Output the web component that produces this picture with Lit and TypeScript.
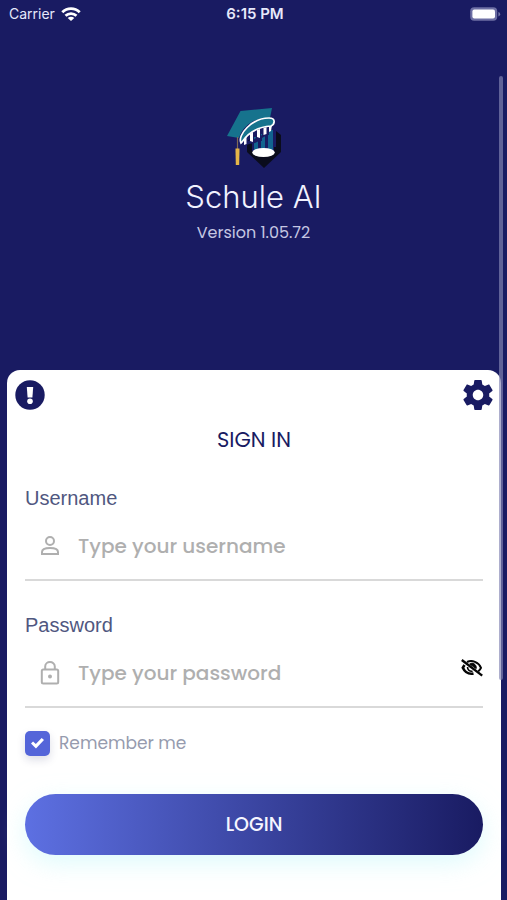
import { LitElement, html, css } from "lit";
import { customElement, state } from "lit/decorators.js";

@customElement("status-bar")
class StatusBar extends LitElement {
  static styles = css`
    :host {
      display: grid;
      grid-template-columns: 1fr auto 1fr;
      align-items: center;
      height: 28px;
      padding: 0 6px 0 9px;
      color: #e6e8fb;
      font: 400 14px/28px Inter, sans-serif;
    }
    .carrier {
      display: flex;
      align-items: center;
      gap: 6px;
    }
    .time {
      font-size: 15px;
      font-weight: 600;
    }
    .battery {
      justify-self: end;
    }
    svg {
      display: block;
    }
  `;

  render() {
    return html`
      <span class="carrier">
        Carrier
        <svg width="20" height="14" viewBox="0 0 20 14" aria-hidden="true">
          <g fill="none" stroke="#fff" stroke-width="2.8">
            <path d="M1.3 5.2C6.2.4 13.8.4 18.7 5.2" />
            <path d="M4.500 8.800C7.700 5.800 12.300 5.800 15.500 8.800" />
          </g>
          <path d="M6.700 11C8.600 9.300 11.400 9.300 13.300 11L10 14Z" fill="#fff" />
        </svg>
      </span>
      <span class="time">6:15 PM</span>
      <svg class="battery" width="31" height="14" viewBox="0 0 31 14" aria-hidden="true">
        <rect x=".2" y=".2" width="27" height="13.600" rx="4" fill="#6d6fa4" />
        <rect x="2.400" y="2.400" width="22.600" height="9.200" rx="2" fill="#fff" />
        <path d="M28.400 5V9.400Q30.200 8.800 30.200 7.200T28.400 5Z" fill="#7476a8" />
      </svg>
    `;
  }
}

@customElement("app-logo")
class AppLogo extends LitElement {
  static styles = css`
    :host,
    svg {
      display: block;
    }
  `;

  render() {
    return html`
      <svg width="56" height="62" viewBox="0 0 56 62" role="img" aria-label="Schule AI logo">
        <path d="M21 34L26 31V40H50V24L55 28V45L38 61L21 45Z" fill="#0a0c1c" />
        <path d="M26 30L48 18V44H26Z" fill="#191b62" />
        <path d="M28 30H32V44H28ZM35 27H39V43H35ZM42 23H47V44H42Z" fill="#11638f" />
        <ellipse cx="37.500" cy="45.500" rx="11.300" ry="4.500" fill="#fff" />
        <path d="M1 29L14.500 4L46 1L44 11C30 10 17 18 13 31Z" fill="#16738d" />
        <path
          d="M17 31L22 28V34L24 33V27L27 25V33L30 31V24L33 22V30L36 28V21L39 20V26L42 24V19L46 18L45 23L43 25V28H41L36 31V34H33L29 36L23 37L19 39L16 37Z"
          fill="#191b62"
        />
        <path
          d="M18 30L20.500 28V37L18 38ZM24 27L27 25V35L24 34ZM31 23L34 22V31L31 30ZM37.500 21L40.500 20V27L37.500 28ZM43 19L46 18L45 24L43 25Z"
          fill="#fff"
        />
        <path
          d="M15 36C11 28 26 11 43 11C50 11 49 17 45 19C31 20 22 26 16 35Z"
          fill="#16738d"
          stroke="#fff"
          stroke-width="1.700"
        />
        <path d="M11.500 30V42" stroke="#806b55" stroke-width="1.200" />
        <path d="M9.500 41.500H13.500V44L13.200 58H9.800L9.500 44Z" fill="#e5b548" />
      </svg>
    `;
  }
}

@customElement("app-root")
class AppRoot extends LitElement {
  @state() private showPassword = false;

  static styles = css`
    :host {
      display: block;
      color: #191b62;
      font-family: Poppins, Inter, sans-serif;
    }
    * {
      box-sizing: border-box;
    }
    svg {
      display: block;
      flex: none;
    }
    .page {
      position: relative;
      display: flex;
      flex-direction: column;
      min-height: 100vh;
      background: #191b62;
    }
    .brand {
      display: flex;
      flex-direction: column;
      align-items: center;
      padding: 79px 0 127px;
    }
    h1 {
      margin: 8px 0 0;
      color: #f1f2ff;
      font: 300 31px/40px Inter, sans-serif;
    }
    .version {
      margin: 6px 0 0;
      color: #c5c7e2;
      font-size: 16px;
      line-height: 20px;
    }
    .card {
      flex: 1;
      margin: 0 6px 0 7px;
      padding: 10px 8px 44px;
      border-radius: 13px 13px 0 0;
      background: #fff;
    }
    .tools {
      display: flex;
      justify-content: space-between;
    }
    button {
      padding: 0;
      border: 0;
      background: none;
      color: inherit;
      font: inherit;
      cursor: pointer;
    }
    form {
      padding: 0 10px;
    }
    h2 {
      margin: 16px 0 0;
      font-size: 21px;
      font-weight: 400;
      line-height: 28px;
      text-align: center;
    }
    .field {
      margin-top: 30px;
    }
    .label {
      display: block;
      color: #505780;
      font: 400 20px/28px "Liberation Sans", Arial, sans-serif;
    }
    .control {
      display: flex;
      align-items: center;
      height: 69px;
      padding-left: 12px;
      border-bottom: 2px solid #d9d9d9;
      color: #afafaf;
    }
    .text {
      flex: 1;
      min-width: 0;
      margin-left: 15px;
      padding: 0;
      border: 0;
      outline: 0;
      background: none;
      color: #505780;
      font: 500 20px/30px Poppins, Inter, sans-serif;
    }
    .text::placeholder {
      color: #afafaf;
      opacity: 1;
    }
    .reveal {
      margin-bottom: 10px;
      color: #050505;
    }
    .remember {
      display: flex;
      align-items: center;
      gap: 9px;
      width: fit-content;
      margin-top: 22px;
      color: #969bae;
      font-size: 17px;
      line-height: 26px;
    }
    .tick {
      display: grid;
      place-items: center;
      width: 25px;
      height: 25px;
      margin: 0;
      appearance: none;
      border-radius: 5px;
      background: #5465d9;
      box-shadow: 0 4px 8px #19206026;
    }
    .tick:checked::before {
      content: "";
      width: 13px;
      height: 11px;
      background: #fff;
      clip-path: polygon(0 55%, 16% 36%, 37% 60%, 82% 5%, 100% 22%, 38% 100%);
    }
    .login {
      display: block;
      width: 100%;
      height: 61px;
      margin-top: 38px;
      border-radius: 31px;
      background: linear-gradient(90deg, #5d70e2, #191b62);
      box-shadow: 0 8px 24px #c8f8fa99;
      color: #f6f6ff;
      font-size: 19px;
      font-weight: 500;
      line-height: 30px;
    }
    .scroll {
      position: absolute;
      top: 76px;
      right: 4px;
      width: 4px;
      height: 604px;
      border-radius: 2px;
      background: #8486b4aa;
    }
  `;

  private toggle() {
    this.showPassword = !this.showPassword;
  }

  render() {
    return html`
      <div class="page">
        <status-bar></status-bar>
        <header class="brand">
          <app-logo></app-logo>
          <h1>Schule AI</h1>
          <p class="version">Version 1.05.72</p>
        </header>
        <main class="card">
          <div class="tools">
            <button type="button" aria-label="Information">
              <svg width="30" height="30" viewBox="0 0 30 30">
                <circle cx="15" cy="15" r="14.700" fill="#191b62" />
                <path d="M11.800 7H18.200L17.400 17.500H12.600Z" fill="#fff" />
                <circle cx="15" cy="21.200" r="2.800" fill="#fff" />
              </svg>
            </button>
            <button type="button" aria-label="Settings">
              <svg width="30" height="30" viewBox="2 2 20 20" fill="#191b62">
                <path
                  d="M19.430 12.980c.04-.32.07-.64.07-.98s-.03-.66-.07-.98l2.110-1.650c.19-.15.24-.42.12-.64l-2-3.460c-.12-.22-.39-.3-.61-.22l-2.490 1c-.52-.4-1.080-.73-1.690-.98l-.38-2.650C14.460 2.180 14.250 2 14 2h-4c-.25 0-.46.18-.49.42l-.38 2.650c-.61.25-1.170.59-1.690.98l-2.490-1c-.23-.09-.49 0-.61.22l-2 3.460c-.13.22-.07.49.12.64l2.110 1.650c-.04.32-.07.65-.07.98s.03.66.07.98l-2.110 1.650c-.19.15-.24.42-.12.64l2 3.460c.12.22.39.3.61.22l2.490-1c.52.4 1.080.73 1.690.98l.38 2.650c.03.24.24.42.49.42h4c.25 0 .46-.18.49-.42l.38-2.650c.61-.25 1.170-.59 1.690-.98l2.490 1c.23.09.49 0 .61-.22l2-3.460c.12-.22.07-.49-.12-.64l-2.110-1.650zM12 15.500c-1.930 0-3.500-1.570-3.500-3.500s1.570-3.500 3.500-3.500 3.500 1.570 3.500 3.500-1.570 3.500-3.500 3.500z"
                />
              </svg>
            </button>
          </div>
          <form @submit=${(e: Event) => e.preventDefault()}>
            <h2>SIGN IN</h2>
            <div class="field">
              <label class="label" for="username">Username</label>
              <div class="control">
                <svg width="26" height="26" viewBox="0 0 26 26" fill="none" stroke="currentColor" stroke-width="2">
                  <circle cx="13" cy="8" r="4" />
                  <path d="M5 21V19C5 16.500 8.500 15 13 15S21 16.500 21 19V21Z" />
                </svg>
                <input class="text" id="username" type="text" placeholder="Type your username" />
              </div>
            </div>
            <div class="field">
              <label class="label" for="password">Password</label>
              <div class="control">
                <svg width="26" height="26" viewBox="0 0 26 26" fill="none" stroke="currentColor" stroke-width="2">
                  <rect x="4.800" y="9.500" width="16.400" height="14" rx="1.500" />
                  <path d="M8.200 9.500V6.500C8.200 .6 17.800 .6 17.800 6.500V9.500" />
                  <circle cx="13" cy="16.500" r="2" fill="currentColor" stroke="none" />
                </svg>
                <input
                  class="text"
                  id="password"
                  type=${this.showPassword ? "text" : "password"}
                  placeholder="Type your password"
                />
                <button class="reveal" type="button" aria-label="Show password" @click=${this.toggle}>
                  <svg width="22" height="20" viewBox="0 0 22 20" fill="none" stroke="currentColor">
                    <path d="M6 4C11 1.800 17.500 3.800 20 9.800C19.300 11.300 18.500 12.400 17.200 13.400" stroke-width="2" />
                    <path d="M3.500 7L1.800 9.800C4 14.500 8 16.300 12.500 15.600" stroke-width="2.600" />
                    <path d="M8.700 6C11.500 3.900 15.800 6.300 15.200 10.600Z" fill="currentColor" stroke-width="1" />
                    <path d="M6.500 9C6.500 12 8.600 13.600 11.600 13.200" stroke-width="1.600" />
                    <path d="M.8 2L21.200 17.600" stroke-width="2.400" />
                  </svg>
                </button>
              </div>
            </div>
            <label class="remember">
              <input class="tick" type="checkbox" checked />
              Remember me
            </label>
            <button class="login" type="submit">LOGIN</button>
          </form>
        </main>
        <div class="scroll"></div>
      </div>
    `;
  }
}
